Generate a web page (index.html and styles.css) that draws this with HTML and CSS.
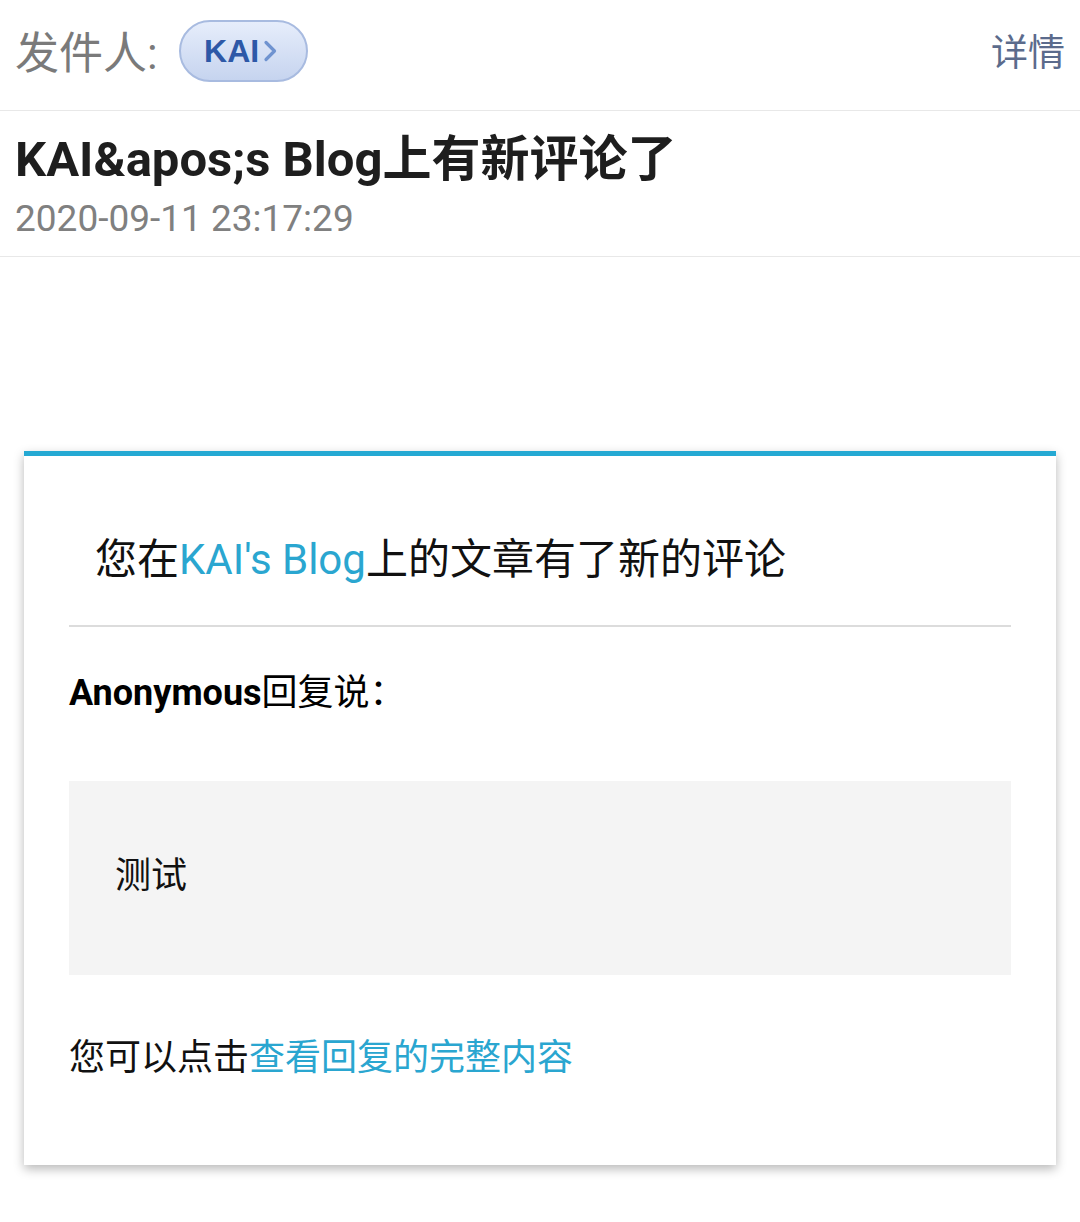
FILE: index.html
```html
<!DOCTYPE html>
<html lang="zh-CN">
<head>
<meta charset="utf-8">
<title>KAI's Blog上有新评论了</title>
<link rel="stylesheet" href="styles.css">
</head>
<body>
<header class="mail-head">
  <div class="sender">
    <span class="sender-label">发件人:</span>
    <span class="chip"><span class="chip-name">KAI</span><svg class="chip-arrow" width="16" height="26" viewBox="0 0 16 26"><path d="M4 4.5 L12.5 13 L4 21.5" fill="none" stroke="#6f93d0" stroke-width="3.2" stroke-linecap="round" stroke-linejoin="round"/></svg></span>
  </div>
  <span class="detail">详情</span>
</header>
<section class="subject">
  <h1 class="subject-title">KAI&amp;apos;s Blog上有新评论了</h1>
  <div class="subject-date">2020-09-11 23:17:29</div>
</section>
<main class="body">
  <div class="card">
    <h2 class="card-title">您在<a class="link" href="#">KAI's Blog</a>上的文章有了新的评论</h2>
    <div class="card-rule"></div>
    <p class="reply-by"><strong>Anonymous</strong>回复说：</p>
    <div class="quote">测试</div>
    <p class="more">您可以点击<a class="link" href="#">查看回复的完整内容</a></p>
  </div>
</main>
</body>
</html>
```
FILE: styles.css
```css
* { box-sizing: border-box; }
html, body { margin: 0; padding: 0; background: #ffffff; }
body {
  font-family: Roboto, "Noto Sans CJK SC", sans-serif;
  color: #111;
}
.mail-head {
  height: 111px;
  display: flex;
  align-items: center;
  justify-content: space-between;
  padding: 0 15px 2px 15px;
  border-bottom: 1px solid #e8e8e8;
}
.sender { display: flex; align-items: center; }
.sender-label {
  font-size: 44px;
  color: #7a7a7a;
  line-height: 60px;
}
.chip {
  margin-left: 21px;
  margin-bottom: 7px;
  width: 129px;
  height: 62px;
  border-radius: 31px;
  border: 2px solid #a8bbe0;
  background: linear-gradient(#e6edfb, #c6d4ef);
  display: flex;
  align-items: center;
  justify-content: center;
  gap: 3px;
  padding-right: 4px;
}
.chip-name {
  font-family: "Liberation Sans", Roboto, sans-serif;
  font-weight: bold;
  font-size: 32px;
  color: #2d58a7;
  line-height: 1;
}
.chip-arrow { display: block; }
.detail {
  font-size: 37px;
  color: #5b6b8c;
  line-height: 60px;
}
.subject {
  padding: 21px 15px 15px;
  border-bottom: 1px solid #e8e8e8;
}
.subject-title {
  margin: 0;
  font-size: 49px;
  line-height: 56px;
  font-weight: bold;
  color: #1e1e1e;
}
.subject-date {
  margin-top: 9px;
  font-size: 37px;
  line-height: 44px;
  color: #808080;
}
.body { padding: 194px 24px 40px; }
.card {
  background: #fff;
  border-top: 5px solid #25a9d3;
  box-shadow: 0 4px 10px rgba(0,0,0,0.28);
  padding: 0 45px 80px;
}
.card-title {
  margin: 0;
  padding: 74px 26px 35px;
  font-size: 42px;
  line-height: 60px;
  font-weight: normal;
  color: #111;
}
.link { color: #2aa6d0; text-decoration: none; }
.card-rule { height: 2px; background: #dcdcdc; }
.reply-by {
  margin: 39px 0 0;
  font-size: 36px;
  line-height: 54px;
  color: #000;
}
.reply-by strong { font-weight: bold; }
.quote {
  margin-top: 61px;
  background: #f4f4f4;
  padding: 68px 46px 72px;
  font-size: 36px;
  line-height: 54px;
  color: #111;
}
.more {
  margin: 56px 0 0;
  font-size: 36px;
  line-height: 54px;
  color: #111;
}
```
